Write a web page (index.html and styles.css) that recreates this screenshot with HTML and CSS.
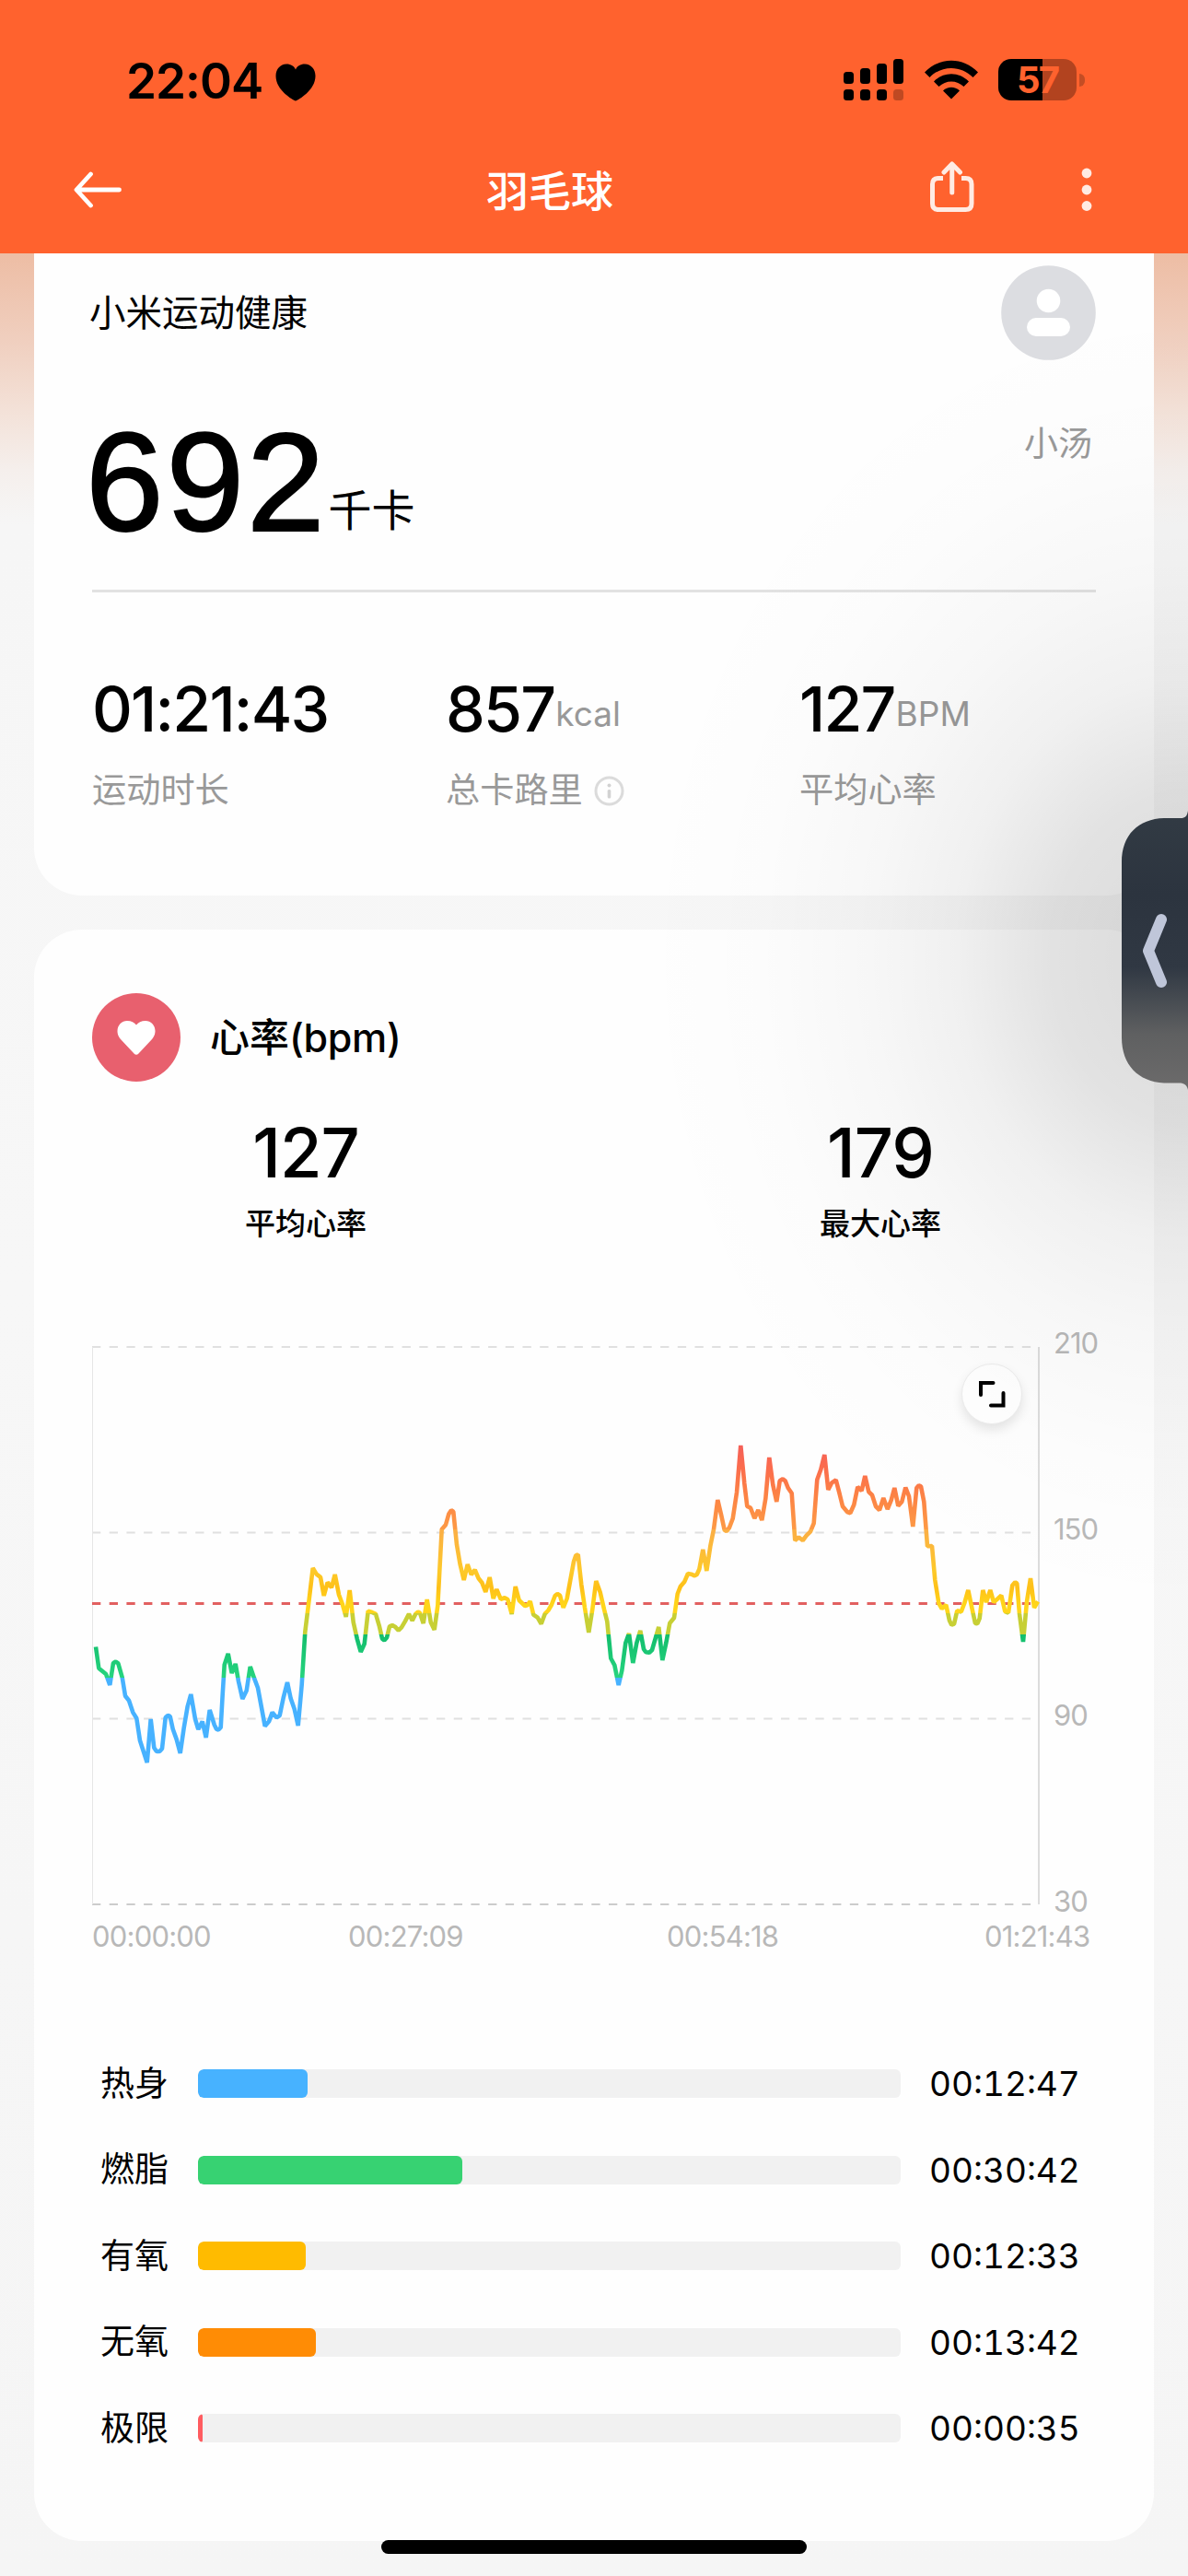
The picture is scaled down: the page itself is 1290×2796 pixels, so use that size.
FILE: index.html
```html
<!DOCTYPE html>
<html lang="zh-Hans">
<head>
    <meta charset="UTF-8">
    <meta name="viewport" content="width=device-width, initial-scale=1.0">
    <meta name="theme-color" content="#ff622e">
    <title>羽毛球</title>
    <link rel="stylesheet" href="styles.css">
</head>
<body>
    <header class="header">
        <div class="status-bar">
            <div class="clock">
                <span>22:04</span>
                <svg class="clock-heart" width="44" height="41" viewBox="0 0 44 41">
                    <path d="M22 40.500C19 39.500 0.500 29 0.500 13.500C0.500 6 5.500 0.500 12 0.500C17 0.500 20.500 3 22 6.500C23.500 3 27 0.500 32 0.500C38.500 0.500 43.500 6 43.500 13.500C43.500 29 25 39.500 22 40.500Z"/>
                </svg>
            </div>
            <div class="status-icons">
                <svg width="66" height="46" viewBox="0 0 66 46">
                    <rect x="0" y="14" width="11" height="13" rx="3.500"/>
                    <rect x="18" y="10" width="11" height="17" rx="3.500"/>
                    <rect x="36" y="5" width="11" height="22" rx="3.500"/>
                    <rect x="54" y="0" width="11" height="27" rx="3.500"/>
                    <rect x="0" y="33" width="11" height="12" rx="3.500"/>
                    <rect x="18" y="33" width="11" height="12" rx="3.500"/>
                    <rect x="36" y="33" width="11" height="12" rx="3.500"/>
                    <rect x="54" y="33" width="11" height="12" rx="3.500" opacity=".25"/>
                </svg>
                <svg width="58" height="46" viewBox="0 0 58 46">
                    <path d="M0 14.500C16 -2.500 42 -2.500 58 14.500L52.500 20C39.500 6.500 18.500 6.500 5.500 20Z"/>
                    <path d="M10 24.500C20.500 13.500 37.500 13.500 48 24.500L42.500 30C35 22.500 23 22.500 15.500 30Z"/>
                    <path d="M20 34.500C25 29.500 33 29.500 38 34.500L29 43.500Z"/>
                </svg>
                <div class="battery">
                    <div class="battery-body">57</div>
                    <div class="battery-tip"></div>
                </div>
            </div>
        </div>
        <nav class="nav">
            <svg class="back" width="52" height="40" viewBox="0 0 52 40">
                <path d="M49.500 20H4M18.500 3L3 20L18.500 37"/>
            </svg>
            <h1>羽毛球</h1>
            <div class="nav-actions">
                <svg class="share" width="50" height="56" viewBox="0 0 50 56">
                    <path d="M15 18.500H10Q3.500 18.500 3.500 25V46Q3.500 52.500 10 52.500H39.500Q46 52.500 46 46V25Q46 18.500 39.500 18.500H35"/>
                    <path d="M24.750 34V3.500M16 12L24.750 3L33.500 12"/>
                </svg>
                <svg class="more" width="12" height="48" viewBox="0 0 12 48">
                    <circle cx="6" cy="6" r="5.400"/>
                    <circle cx="6" cy="24" r="5.400"/>
                    <circle cx="6" cy="41.500" r="5.400"/>
                </svg>
            </div>
        </nav>
    </header>

    <main>
        <!-- 运动概览 -->
        <section class="card overview">
            <div class="brand-row">
                <span class="brand">小米运动健康</span>
                <svg width="103" height="103" viewBox="0 0 103 103">
                    <circle cx="51.500" cy="51.500" r="51.300" fill="#dcdde1"/>
                    <circle cx="51.500" cy="38.500" r="12.800" fill="#fff"/>
                    <rect x="28" y="57" width="47" height="20" rx="10" fill="#fff"/>
                </svg>
            </div>
            <div class="calories">
                <div class="calories-value"><span class="big">692</span><span class="big-unit">千卡</span></div>
                <span class="user">小汤</span>
            </div>
            <div class="stats">
                <div class="stat">
                    <div class="value"><b>01:21:43</b></div>
                    <div class="label">运动时长</div>
                </div>
                <div class="stat">
                    <div class="value"><b>857</b><span>kcal</span></div>
                    <div class="label">总卡路里
                        <svg width="33" height="33" viewBox="0 0 33 33">
                            <circle cx="16.500" cy="16.500" r="14.500" fill="none" stroke="#dbdbdb" stroke-width="3"/>
                            <circle cx="16.500" cy="10.500" r="2" fill="#d2d2d2"/>
                            <rect x="14.700" y="15" width="3.600" height="9.500" rx="1.500" fill="#d2d2d2"/>
                        </svg>
                    </div>
                </div>
                <div class="stat">
                    <div class="value"><b>127</b><span>BPM</span></div>
                    <div class="label">平均心率</div>
                </div>
            </div>
        </section>

        <!-- 心率 -->
        <section class="card heart">
            <div class="heart-title">
                <svg width="96" height="96" viewBox="0 0 96 96">
                    <circle cx="48" cy="48" r="48" fill="#e8606e"/>
                    <path d="M45.500 65.500L31 50C27.500 46 27.500 42 27.500 41C27.500 34.500 32.500 30 38 30C42.500 30 46 32 48 34.500C50 32 53.500 30 58 30C63.500 30 68.500 34.500 68.500 41C68.500 42 68.500 46 65 50L50.500 65.500Q48 68 45.500 65.500Z" fill="#fff"/>
                </svg>
                <h2>心率<span>(bpm)</span></h2>
            </div>
            <div class="summary">
                <div><b>127</b><p>平均心率</p></div>
                <div><b>179</b><p>最大心率</p></div>
            </div>

            <div class="chart">
                <div class="plot">
                    <svg width="1030" height="608" viewBox="0 0 1030 608">
                        <defs>
                            <linearGradient id="zones" gradientUnits="userSpaceOnUse" x1="0" y1="100" x2="0" y2="400">
                                <stop offset="0" stop-color="#f25c5c"/>
                                <stop offset=".1" stop-color="#fb6b4e"/>
                                <stop offset=".2" stop-color="#fc8145"/>
                                <stop offset=".33" stop-color="#fd9a45"/>
                                <stop offset=".33" stop-color="#fbae45"/>
                                <stop offset=".48" stop-color="#fdc92a"/>
                                <stop offset=".54" stop-color="#fec018"/>
                                <stop offset=".6" stop-color="#ffd51a"/>
                                <stop offset=".635" stop-color="#ffd51a"/>
                                <stop offset=".635" stop-color="#c8cf34"/>
                                <stop offset=".71" stop-color="#c6d036"/>
                                <stop offset=".71" stop-color="#12bd6c"/>
                                <stop offset=".866" stop-color="#26d47e"/>
                                <stop offset=".866" stop-color="#47b2ff"/>
                            </linearGradient>
                        </defs>
                        <g class="grid">
                            <path d="M0 1H1020M0 202.500H1020M0 404.500H1020"/>
                            <path class="base" d="M0 606H1020"/>
                        </g>
                        <path class="edge-left" d="M.500 1V606"/>
                        <path class="edge-right" d="M1028 1V606"/>
                        <path class="average" d="M0 279.500H1020"/>
                        <polyline class="line" stroke="url(#zones)" points="
                            4,326.500 7.300,349.700 15,356 19.300,368 23,344 25.700,342.600 28.300,344.400 32.700,359.700 36,379.700 40,384.700
                            44.300,397.600 48.300,404 52,428.300 59.700,452 63.700,405 67.300,436 70,440 73.300,440 76,437 79.700,403.300
                            82.300,401 84.700,401.900 87.700,415.800 91.700,426.900 95.700,442 99.700,414.400 103.700,391 107.300,378 112,405 115.300,416
                            119.700,407.600 123.700,425 127.700,395 132.700,411 135,415.800 137.300,416.500 139.700,414 141.700,378.300 143.700,346 147.700,334
                            151.700,355 155.700,345 159,364 163.300,383 167.700,374 171.700,348 176,360.400 180,371 187.700,412.500 192,407.600
                            195.700,397.600 200.300,403.300 203.700,401 207.700,381.900 212,365 215.700,382.600 219.700,394 223.700,412 227.700,367.600 231.300,310.400
                            235.700,274.700 239.700,241 243.700,247.600 248,250.800 251.700,271 255.700,256.500 260,262.200 263.700,248 268,270 271.700,279.700
                            275.700,294 279.700,265 283.700,299.700 287.700,317.600 291.700,332 295.700,323.300 299.700,287.600 304,289 308,290.800 311.700,303.300
                            315,317.600 317.300,319.400 320,316.500 323,304.400 326,303 329,304.700 332.700,308.600 336,305.400 340,298.600 344,290.800
                            347.700,298 351.300,290.800 354,288.600 356,289.700 359.700,301 363.700,275 367.700,299.700 371.700,308 375.300,281.900 379.700,199
                            384,194 387.300,182.300 390,178.300 392.300,179.700 396,215.700 399.700,237.300 403.700,254 407.700,237 411.700,248 415.700,243
                            419.700,252.300 423.300,256.700 427.300,267 431.700,251 435.700,274 439.300,264 443.700,274.700 448,273.300 451.300,275 455.700,291
                            459.700,261 463.700,276 470,282 472.700,281.300 475.700,277 479.300,291.700 483.700,294.700 487.700,301.500 491.700,290.700 495.300,287
                            498.700,281.300 502.700,271 505.300,269 508,270.700 511.700,284 515.700,274 519.300,254 523,234 525.300,227.300 527.700,226.300
                            531.300,259 535,284 539.300,311 543.300,285.700 547.300,255 551.700,267.300 556,285.700 559.300,299 563.300,339 567.300,346.300
                            571.700,368 575.300,352.300 579.300,322.300 583,312 587.300,344 591.300,322.300 595.300,309 599,329 601.300,332.300 605,332.700
                            608,330 611.700,317.300 615.300,305 619.300,341 623.300,322.300 627.300,300.700 632,295 635.700,269 639,260.700 643.300,255.700
                            647,247 650.700,247.700 654.300,249.300 656.700,248 659.300,242.300 663.300,221 667.300,244 671.300,217.300 675,199 679.300,167
                            683.300,184 686.700,199.700 689,201 692,197 695.700,187.300 700,159 704.300,108 708.300,149 711.300,174 715,175.700
                            719.300,187 723.300,178 727.300,189 731.300,165.700 735.300,121 739.300,150.700 743.300,169 746.700,146.300 750,144.300 752.700,146.300
                            755.700,154 759.700,159.700 763.300,211 767.300,207.500 771.700,211 775.700,205.700 780,201.300 783.700,192.300 787.300,145 791.300,134
                            795.300,118 799.300,156 803.300,148.300 807.700,145.300 811.700,160.700 815,174 820,180 823.300,181.300 827.300,172.300 831.300,153
                            835.700,157 839.300,141 843.300,158.300 847,161.700 851,174 855,178 859.300,165 863.700,177 867.700,167.300 871.300,154
                            875.300,173.500 879.300,169 883.300,153.500 887,163 891.300,196 895.300,154 897.700,151.300 900,152.300 903.300,169 907,217.300
                            912,217 915.300,254 919.300,279 922.700,285 927.300,281 931,298 933.300,302.700 936,301.700 939.300,287.300 943.700,288.500
                            947.300,279 951.300,265 955.300,284 959,301 961.300,301.300 963.700,295.700 967.300,265 971,278 975.300,265 979,278
                            983.700,274 987.300,270.700 991.300,288 995,289.500 999.300,259.700 1002.300,256.300 1004.300,257.700 1007,290.700 1011,321 1015,277.300
                            1019,252 1023,284 1027,277.300"/>
                    </svg>
                    <button class="expand">
                        <svg width="32" height="32" viewBox="0 0 32 32">
                            <path d="M4 17V4H17.500M28.500 15V28.500H15"/>
                        </svg>
                    </button>
                </div>
                <div class="y-axis"><span>210</span><span>150</span><span>90</span><span>30</span></div>
            </div>
            <div class="x-axis"><span>00:00:00</span><span>00:27:09</span><span>00:54:18</span><span>01:21:43</span></div>

            <div class="zones">
                <div class="zone">
                    <span class="name">热身</span>
                    <div class="bar"><div class="fill warm" style="width: 15.600%"></div></div>
                    <span class="time">00:12:47</span>
                </div>
                <div class="zone">
                    <span class="name">燃脂</span>
                    <div class="bar"><div class="fill fat" style="width: 37.600%"></div></div>
                    <span class="time">00:30:42</span>
                </div>
                <div class="zone">
                    <span class="name">有氧</span>
                    <div class="bar"><div class="fill aerobic" style="width: 15.300%"></div></div>
                    <span class="time">00:12:33</span>
                </div>
                <div class="zone">
                    <span class="name">无氧</span>
                    <div class="bar"><div class="fill anaerobic" style="width: 16.800%"></div></div>
                    <span class="time">00:13:42</span>
                </div>
                <div class="zone">
                    <span class="name">极限</span>
                    <div class="bar"><div class="fill limit" style="width: .700%"></div></div>
                    <span class="time">00:00:35</span>
                </div>
            </div>
        </section>
    </main>

    <!-- 侧边悬浮把手 -->
    <div class="side-shade"></div>
    <svg class="side-tab" width="72" height="304" viewBox="0 0 72 304">
        <defs>
            <linearGradient id="tab" x1="0" y1="0" x2="0" y2="1">
                <stop offset="0" stop-color="#323b44"/>
                <stop offset=".3" stop-color="#2c343f"/>
                <stop offset=".56" stop-color="#303843"/>
                <stop offset=".68" stop-color="#474c52"/>
                <stop offset=".8" stop-color="#5f6061"/>
                <stop offset="1" stop-color="#6c6b6b"/>
            </linearGradient>
        </defs>
        <path d="M72 0C71 6 69 8 64 8H46C18 9 0 26 0 56V246C0 276 18 294 46 295.500H64C68 296 71 298 72 303Z" fill="url(#tab)"/>
        <path d="M43 118L29 152L43 186" fill="none" stroke="#bfc6d9" stroke-width="12" stroke-linecap="round" stroke-linejoin="round"/>
    </svg>
    <div class="home-indicator"></div>
</body>
</html>
```
FILE: styles.css
```css
* {
    box-sizing: border-box;
    margin: 0;
    padding: 0;
}
body {
    position: relative;
    width: 1290px;
    height: 2796px;
    overflow: hidden;
    font-family: Inter, "Noto Sans CJK SC", sans-serif;
    color: #000;
    background: linear-gradient(180deg, #edbda4 275px, #f0cfbf 370px, #f3e0d6 440px, #f5efec 510px, #f6f6f6 570px, #f7f7f7 1400px, #f5f5f5 2796px);
}
svg {
    display: block;
    flex: none;
}
.header {
    height: 275px;
    background: #ff622e;
}
.status-bar {
    display: flex;
    justify-content: space-between;
    height: 161px;
    padding: 64px 112px 0 137px;
}
.clock {
    display: flex;
    gap: 14px;
    height: 46px;
    line-height: 48px;
    font-size: 53px;
    font-weight: 600;
    letter-spacing: -1px;
}
.clock-heart {
    margin-top: 5px;
}
.status-icons {
    display: flex;
    gap: 22px;
}
.battery {
    display: flex;
    align-items: center;
    gap: 3px;
    height: 45px;
}
.battery-body {
    width: 85px;
    height: 45px;
    border-radius: 14px;
    background: linear-gradient(90deg, #000 48px, #b2431f 48px);
    color: #ff622e;
    font-size: 40px;
    font-weight: 700;
    line-height: 45px;
    letter-spacing: -2px;
    text-align: center;
}
.battery-tip {
    width: 6px;
    height: 14px;
    border-radius: 0 6px 6px 0;
    background: #c44d24;
}
.nav {
    display: grid;
    grid-template-columns: 448px auto 1fr;
    align-items: center;
    height: 92px;
    padding: 0 104px 0 80px;
}
.nav h1 {
    color: #fff;
    font-size: 46px;
    font-weight: 500;
    line-height: 60px;
}
.back {
    margin-top: -2px;
    fill: none;
    stroke: #fff;
    stroke-width: 4.8;
    stroke-linecap: round;
    stroke-linejoin: round;
}
.nav-actions {
    display: flex;
    align-items: center;
    justify-content: flex-end;
    gap: 115px;
}
.share {
    margin-top: -8px;
    fill: none;
    stroke: #ffebe3;
    stroke-width: 5;
    stroke-linecap: round;
    stroke-linejoin: round;
}
.share path:first-child {
    stroke-linecap: butt;
}
.more {
    margin-top: -3px;
    fill: #ffebe3;
}
.card {
    margin: 0 37px;
    background: #fefefe;
}
.overview {
    height: 697px;
    padding: 13px 63px 0;
    border-radius: 0 0 52px 52px;
}
.brand-row {
    display: flex;
    align-items: center;
    justify-content: space-between;
    height: 103px;
}
.brand {
    margin: 0 0 0 -3px;
    font-size: 39.500px;
    line-height: 48px;
}
.calories {
    display: flex;
    align-items: flex-start;
    justify-content: space-between;
    height: 252px;
    border-bottom: 3px solid #e2e2e2;
}
.calories-value {
    display: flex;
    align-items: flex-end;
    margin: 59px 0 0 -7px;
}
.big {
    font-family: "Liberation Sans", Arial, sans-serif;
    font-size: 152px;
    line-height: 146px;
    letter-spacing: 3px;
    -webkit-text-stroke: 2px #000;
}
.big-unit {
    margin: 0 0 19px 1px;
    font-size: 47px;
    line-height: 46px;
}
.user {
    margin: 72px 4px 0 0;
    color: #999;
    font-size: 37px;
    line-height: 37px;
}
.stats {
    display: grid;
    grid-template-columns: 384px 384px auto;
    padding-top: 92px;
}
.value {
    display: flex;
    align-items: flex-end;
}
.value b {
    font-size: 68px;
    font-weight: 500;
    line-height: 68px;
    letter-spacing: -1.8px;
}
.value span {
    margin: 0 0 10px 1px;
    color: #999;
    font-size: 37px;
    line-height: 37px;
}
.label {
    display: flex;
    align-items: center;
    gap: 12px;
    margin-top: 35px;
    color: #999;
    font-size: 37.200px;
    line-height: 40px;
}
.heart {
    height: 1749px;
    margin-top: 37px;
    padding-top: 69px;
    border-radius: 52px;
}
.heart-title {
    display: flex;
    align-items: center;
    gap: 32px;
    margin-left: 63px;
}
.heart-title h2 {
    font-size: 43px;
    font-weight: 500;
    line-height: 50px;
}
.heart-title span {
    letter-spacing: -.3px;
}
.summary {
    display: grid;
    grid-template-columns: 590px 594px;
    gap: 32px;
    margin-top: 40px;
    text-align: center;
}
.summary b {
    display: block;
    font-size: 74px;
    font-weight: 500;
    line-height: 74px;
    letter-spacing: -1px;
}
.summary p {
    margin-top: 23px;
    font-size: 33px;
    font-weight: 500;
    line-height: 34px;
}
.chart {
    display: flex;
    gap: 14px;
    height: 608px;
    margin: 116px 0 0 63px;
}
.plot {
    position: relative;
    width: 1030px;
}
.plot path, .line {
    fill: none;
}
.grid {
    stroke: #e0e0e0;
    stroke-width: 2;
    stroke-dasharray: 9.3 9.4;
}
.base {
    stroke: #ccc;
}
.edge-left {
    stroke: #e6e6e6;
}
.edge-right {
    stroke: #dcdcdc;
    stroke-width: 2;
}
.average {
    stroke: #e26060;
    stroke-width: 3;
    stroke-dasharray: 9.3 9.4;
}
.line {
    stroke-width: 4.6;
    stroke-linejoin: bevel;
}
.expand {
    position: absolute;
    top: 19px;
    right: 20px;
    display: flex;
    align-items: center;
    justify-content: center;
    width: 66px;
    height: 66px;
    border: 1px solid #ededed;
    border-radius: 50%;
    background: #fff;
    box-shadow: 0 6px 12px rgba(0, 0, 0, 0.1);
}
.expand path {
    stroke: #000;
    stroke-width: 4;
    stroke-linecap: round;
}
.y-axis {
    display: flex;
    flex-direction: column;
    justify-content: space-between;
    height: 638px;
    margin-top: -19px;
    color: #b8b8b8;
    font-size: 31px;
    line-height: 32px;
    letter-spacing: -1px;
}
.x-axis {
    display: grid;
    grid-template-columns: 278px 346px 345px auto;
    margin: 17px 0 0 63px;
    color: #b8b8b8;
    font-size: 31px;
    line-height: 32px;
    letter-spacing: -.8px;
}
.zones {
    display: flex;
    flex-direction: column;
    gap: 62.500px;
    margin: 128px 0 0 72px;
}
.zone {
    display: flex;
    align-items: center;
    height: 31px;
}
.name {
    width: 106px;
    font-size: 37px;
    line-height: 32px;
}
.bar {
    width: 763px;
    height: 31px;
    border-radius: 6px;
    background: #f1f1f1;
    overflow: hidden;
}
.fill {
    height: 100%;
    border-radius: 6px;
}
.warm { background: #47b2ff; }
.fat { background: #37d272; }
.aerobic { background: #ffbb00; }
.anaerobic { background: #ff8c05; }
.limit { background: #ff5c60; }
.time {
    margin-left: 31px;
    font-size: 37px;
    line-height: 31px;
    font-variant-numeric: tabular-nums;
}
.side-shade {
    position: absolute;
    top: 275px;
    right: 0;
    width: 640px;
    height: 1500px;
    background: radial-gradient(ellipse 600px 720px at 640px 765px, rgba(0, 0, 0, 0.145), rgba(0, 0, 0, 0.11) 25%, rgba(0, 0, 0, 0.055) 42%, rgba(0, 0, 0, 0.026) 58%, rgba(0, 0, 0, 0.008) 78%, rgba(0, 0, 0, 0));
}
.side-tab {
    position: absolute;
    top: 880px;
    right: 0;
}
.home-indicator {
    position: absolute;
    bottom: 24px;
    left: 414px;
    width: 462px;
    height: 15px;
    border-radius: 8px;
    background: #000;
}
```
